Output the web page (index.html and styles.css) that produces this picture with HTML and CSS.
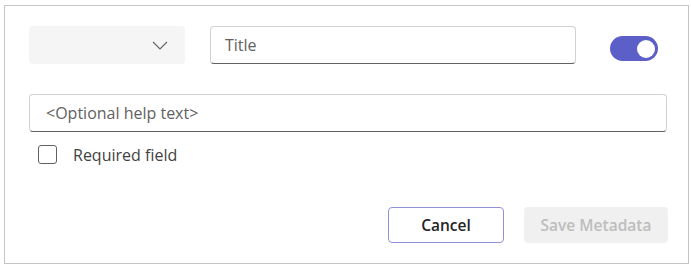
FILE: index.html
```html
<!DOCTYPE html>
<html>
<head>
<meta charset="utf-8">
<link rel="stylesheet" href="styles.css">
</head>
<body>
<div class="page">
  <form class="card">
    <div class="row top">
      <div class="dropdown">
        <svg class="chevron" width="16" height="9" viewBox="0 0 16 9"><path d="M1 1 L8 8 L15 1" fill="none" stroke="#616161" stroke-width="1.1"/></svg>
      </div>
      <div class="input title"><span class="ph">Title</span></div>
      <div class="toggle"><span class="knob"></span></div>
    </div>
    <div class="input help"><span class="ph">&lt;Optional help text&gt;</span></div>
    <label class="check">
      <span class="box"></span>
      <span class="check-label">Required field</span>
    </label>
    <div class="actions">
      <button type="button" class="btn cancel">Cancel</button>
      <button type="button" class="btn save" disabled>Save Metadata</button>
    </div>
  </form>
</div>
</body>
</html>
```
FILE: styles.css
```css
* { box-sizing: border-box; }
html, body { margin: 0; padding: 0; background: #fff; }
body {
  font-family: "Open Sans", "Noto Sans", "Liberation Sans", sans-serif;
  font-size: 16px;
  color: #242424;
}
.page { padding: 5px 0 0 4px; }
.card {
  width: 685px;
  height: 259px;
  border: 1px solid #c4c4c4;
  padding: 20px 20px 0 24px;
  display: flex;
  flex-direction: column;
}
.row.top {
  display: flex;
  align-items: flex-start;
  height: 38px;
}
.dropdown {
  width: 156px;
  height: 38px;
  background: #f5f5f5;
  border-radius: 4px;
  display: flex;
  align-items: center;
  justify-content: flex-end;
  padding-right: 17px;
}
.chevron { display: block; margin-top: 1px; }
.input {
  height: 38px;
  border: 1px solid #d1d1d1;
  border-bottom-color: #616161;
  border-radius: 4px;
  display: flex;
  align-items: center;
  background: #fff;
}
.ph { color: #616161; }
.title {
  width: 366px;
  margin-left: 25px;
  padding-left: 14px;
}
.toggle {
  width: 48px;
  height: 25px;
  border-radius: 13px;
  background: #5b5fc7;
  margin-left: 34px;
  margin-top: 10px;
  display: flex;
  align-items: center;
  justify-content: flex-end;
  padding-right: 3px;
}
.knob {
  width: 18px;
  height: 18px;
  border-radius: 50%;
  background: #fff;
}
.help {
  margin-top: 30px;
  width: 638px;
  padding-left: 16px;
}
.check {
  display: flex;
  align-items: center;
  margin-top: 13px;
  margin-left: 9px;
  height: 19px;
}
.box {
  width: 19px;
  height: 19px;
  border: 1px solid #616161;
  border-radius: 3px;
}
.check-label {
  margin-left: 16px;
  color: #424242;
}
.actions {
  display: flex;
  justify-content: flex-end;
  gap: 20px;
  margin-top: 43px;
}
.btn {
  height: 36px;
  border-radius: 4px;
  font-family: inherit;
  font-size: 15.5px;
  font-weight: 600;
}
.cancel {
  width: 116px;
  border: 1px solid #8f92d8;
  background: #fff;
  color: #242424;
}
.save {
  width: 144px;
  border: none;
  background: #f0f0f0;
  color: #bdbdbd;
}
```
